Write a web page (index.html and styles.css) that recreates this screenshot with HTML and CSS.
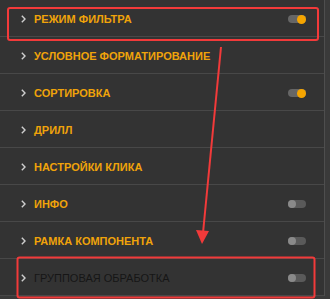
FILE: index.html
```html
<!DOCTYPE html>
<html>
<head>
<meta charset="utf-8">
<link rel="stylesheet" href="styles.css">
</head>
<body>
<div class="page">
  <div class="panel">
    <div class="row"><svg class="chev" width="5" height="8" viewBox="0 0 5 8"><polyline points="0.8,0.8 4,4 0.8,7.2" fill="none" stroke="#cfcfcf" stroke-width="1.4"/></svg><span class="label">Режим фильтра</span><span class="toggle on"></span></div>
    <div class="row"><svg class="chev" width="5" height="8" viewBox="0 0 5 8"><polyline points="0.8,0.8 4,4 0.8,7.2" fill="none" stroke="#cfcfcf" stroke-width="1.4"/></svg><span class="label">Условное форматирование</span></div>
    <div class="row"><svg class="chev" width="5" height="8" viewBox="0 0 5 8"><polyline points="0.8,0.8 4,4 0.8,7.2" fill="none" stroke="#cfcfcf" stroke-width="1.4"/></svg><span class="label">Сортировка</span><span class="toggle on"></span></div>
    <div class="row"><svg class="chev" width="5" height="8" viewBox="0 0 5 8"><polyline points="0.8,0.8 4,4 0.8,7.2" fill="none" stroke="#cfcfcf" stroke-width="1.4"/></svg><span class="label">Дрилл</span></div>
    <div class="row"><svg class="chev" width="5" height="8" viewBox="0 0 5 8"><polyline points="0.8,0.8 4,4 0.8,7.2" fill="none" stroke="#cfcfcf" stroke-width="1.4"/></svg><span class="label">Настройки клика</span></div>
    <div class="row"><svg class="chev" width="5" height="8" viewBox="0 0 5 8"><polyline points="0.8,0.8 4,4 0.8,7.2" fill="none" stroke="#cfcfcf" stroke-width="1.4"/></svg><span class="label">Инфо</span><span class="toggle"></span></div>
    <div class="row"><svg class="chev" width="5" height="8" viewBox="0 0 5 8"><polyline points="0.8,0.8 4,4 0.8,7.2" fill="none" stroke="#cfcfcf" stroke-width="1.4"/></svg><span class="label">Рамка компонента</span><span class="toggle"></span></div>
    <div class="row disabled"><svg class="chev" width="5" height="8" viewBox="0 0 5 8"><polyline points="0.8,0.8 4,4 0.8,7.2" fill="none" stroke="#cfcfcf" stroke-width="1.4"/></svg><span class="label">Групповая обработка</span><span class="toggle"></span></div>
  </div>
  <svg class="annot" width="330" height="299" viewBox="0 0 330 299">
    <rect x="8" y="8" width="310" height="32" rx="2" fill="none" stroke="#f23a3a" stroke-width="2"/>
    <rect x="17.5" y="257.5" width="297" height="40" rx="2" fill="none" stroke="#f23a3a" stroke-width="2"/>
    <line x1="221" y1="47" x2="203" y2="233" stroke="#f23a3a" stroke-width="2"/>
    <polygon points="196,230 209,231 202,244" fill="#f23a3a"/>
  </svg>
</div>
</body>
</html>
```
FILE: styles.css
```css
html, body {
  margin: 0;
  padding: 0;
  background: #2e2e2e;
}
.page {
  position: relative;
  width: 330px;
  height: 299px;
  overflow: hidden;
  background: #3a3a3a;
}
.panel {
  width: 324px;
  border-right: 1px solid #4e4e4e;
  background: #333333;
  display: flex;
  flex-direction: column;
}
.row {
  box-sizing: border-box;
  height: 37px;
  border-bottom: 1px solid #484848;
  display: flex;
  align-items: center;
  padding: 2px 18px 0 21px;
  font-family: "Liberation Sans", Arial, sans-serif;
  font-weight: bold;
  font-size: 11px;
  text-transform: uppercase;
}
.chev {
  flex: none;
  margin-right: 8px;
}
.label {
  color: #f0a30a;
  flex: 1;
}
.disabled .label {
  color: #161616;
  font-weight: normal;
}
.toggle {
  width: 18px;
  height: 8px;
  border-radius: 4px;
  background: #5a5a5a;
  position: relative;
}
.toggle::after {
  content: "";
  position: absolute;
  top: 0;
  left: 0;
  width: 8px;
  height: 8px;
  border-radius: 50%;
  background: #8a8a8a;
}
.toggle.on {
  background: #666666;
}
.toggle.on::after {
  left: auto;
  right: 0;
  width: 9px;
  height: 9px;
  top: -0.5px;
  background: #f5a500;
}
.annot {
  position: absolute;
  left: 0;
  top: 0;
  pointer-events: none;
}
```
